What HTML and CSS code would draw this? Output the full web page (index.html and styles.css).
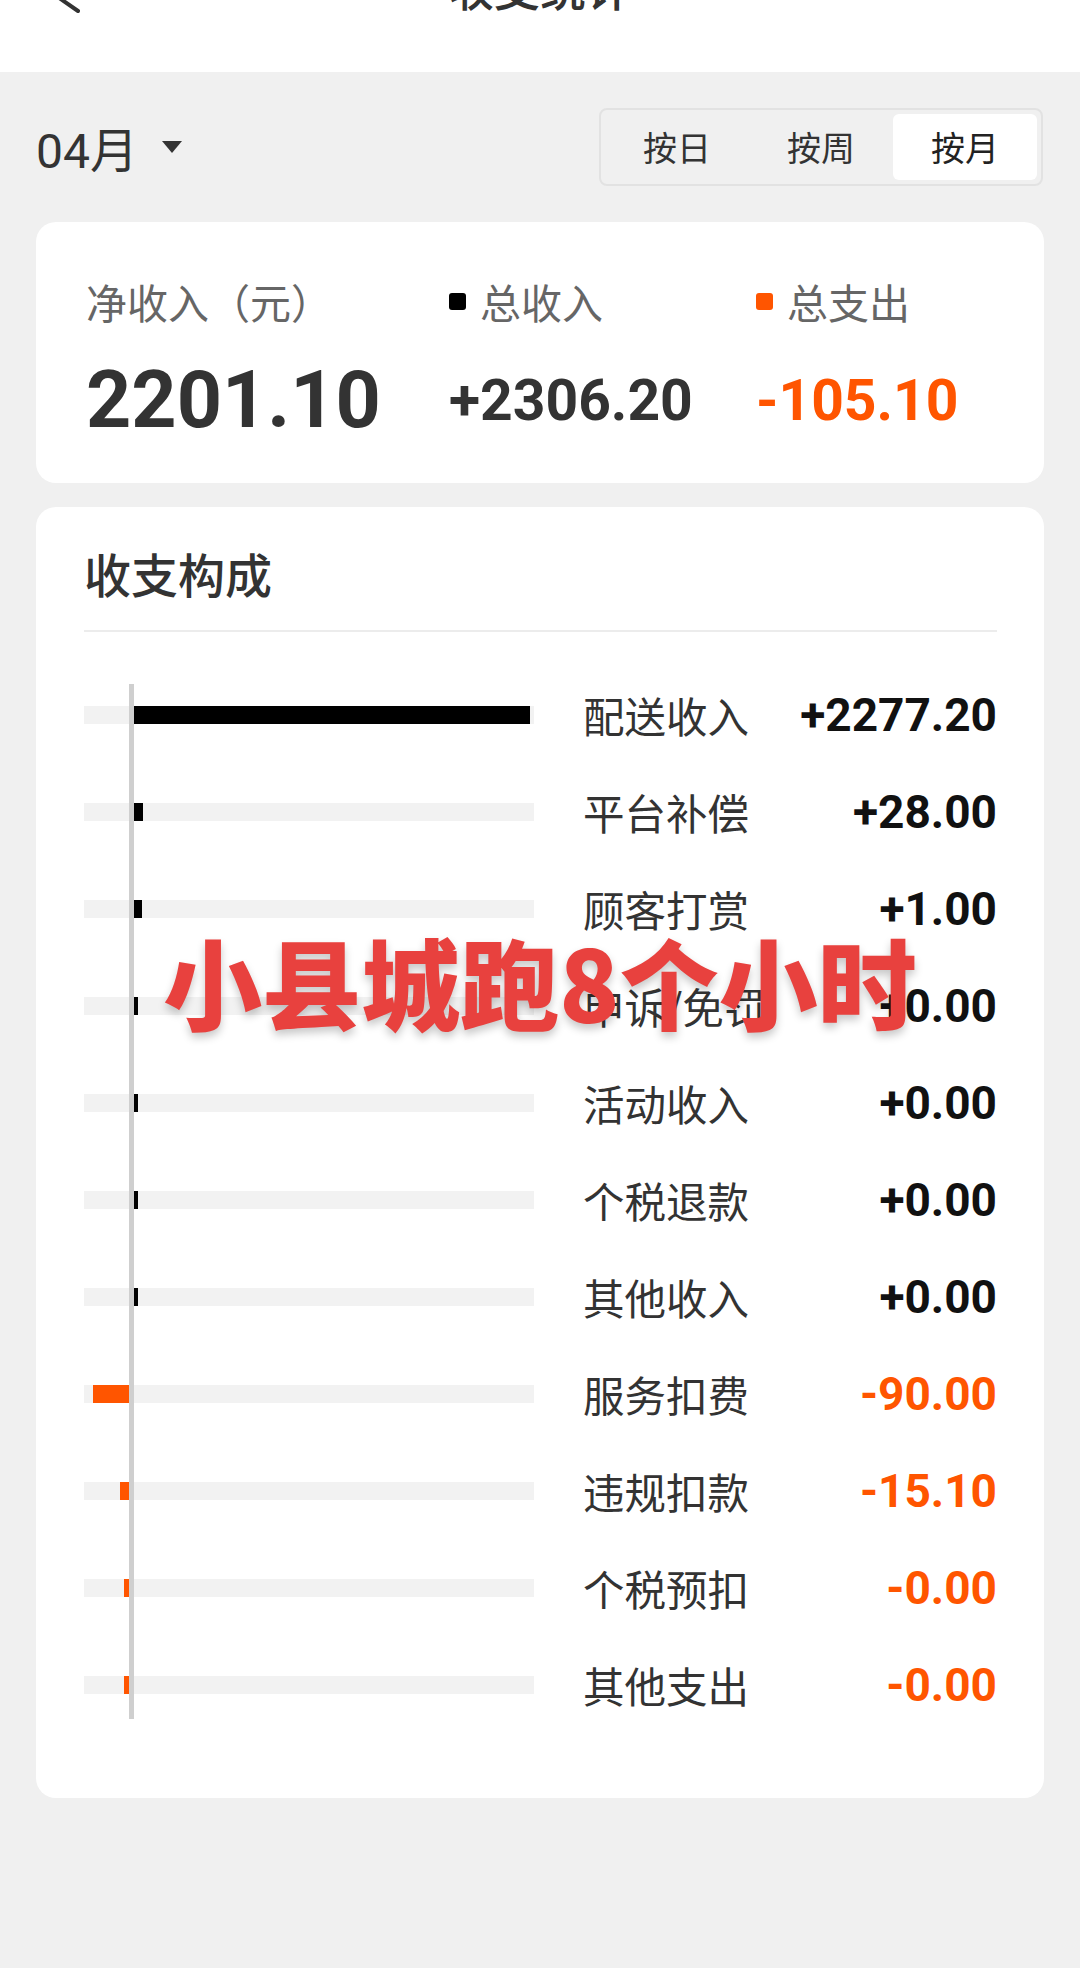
FILE: index.html
```html
<!DOCTYPE html>
<html lang="zh-CN">
<head>
    <meta charset="UTF-8">
    <meta name="viewport" content="width=device-width, initial-scale=1.0">
    <title>收支统计</title>
    <link rel="stylesheet" href="styles.css">
</head>
<body>
    <header class="topbar">
        <div class="nav">
            <svg class="back" viewBox="0 0 40 56" fill="none" stroke="#333" stroke-width="4" stroke-linecap="round" stroke-linejoin="round">
                <polyline points="38,3 2,28 38,53"/>
            </svg>
            <h1>收支统计</h1>
            <span></span>
        </div>
    </header>

    <main class="page">
        <div class="filter">
            <div class="month">04月<span class="caret"></span></div>
            <div class="tabs">
                <span>按日</span>
                <span>按周</span>
                <span class="active">按月</span>
            </div>
        </div>

        <section class="card summary">
            <div class="sum-label">净收入（元）</div>
            <div class="sum-label"><i class="dot"></i>总收入</div>
            <div class="sum-label"><i class="dot orange"></i>总支出</div>
            <div class="net">2201.10</div>
            <div class="amt">+2306.20</div>
            <div class="amt out">-105.10</div>
        </section>

        <section class="card breakdown">
            <h2>收支构成</h2>
            <div class="chart">
                <div class="row">
                    <div class="track"><div class="neg"></div><div class="pos"><div class="bar" style="width:396px"></div></div></div>
                    <span class="label">配送收入</span><span class="value">+2277.20</span>
                </div>
                <div class="row">
                    <div class="track"><div class="neg"></div><div class="pos"><div class="bar" style="width:9px"></div></div></div>
                    <span class="label">平台补偿</span><span class="value">+28.00</span>
                </div>
                <div class="row">
                    <div class="track"><div class="neg"></div><div class="pos"><div class="bar" style="width:8px"></div></div></div>
                    <span class="label">顾客打赏</span><span class="value">+1.00</span>
                </div>
                <div class="row">
                    <div class="track"><div class="neg"></div><div class="pos"><div class="bar" style="width:4px"></div></div></div>
                    <span class="label">申诉/免罚</span><span class="value">+0.00</span>
                </div>
                <div class="row">
                    <div class="track"><div class="neg"></div><div class="pos"><div class="bar" style="width:4px"></div></div></div>
                    <span class="label">活动收入</span><span class="value">+0.00</span>
                </div>
                <div class="row">
                    <div class="track"><div class="neg"></div><div class="pos"><div class="bar" style="width:4px"></div></div></div>
                    <span class="label">个税退款</span><span class="value">+0.00</span>
                </div>
                <div class="row">
                    <div class="track"><div class="neg"></div><div class="pos"><div class="bar" style="width:4px"></div></div></div>
                    <span class="label">其他收入</span><span class="value">+0.00</span>
                </div>
                <div class="row">
                    <div class="track"><div class="neg"><div class="bar" style="width:36px"></div></div><div class="pos"></div></div>
                    <span class="label">服务扣费</span><span class="value out">-90.00</span>
                </div>
                <div class="row">
                    <div class="track"><div class="neg"><div class="bar" style="width:9px"></div></div><div class="pos"></div></div>
                    <span class="label">违规扣款</span><span class="value out">-15.10</span>
                </div>
                <div class="row">
                    <div class="track"><div class="neg"><div class="bar" style="width:5px"></div></div><div class="pos"></div></div>
                    <span class="label">个税预扣</span><span class="value out">-0.00</span>
                </div>
                <div class="row">
                    <div class="track"><div class="neg"><div class="bar" style="width:5px"></div></div><div class="pos"></div></div>
                    <span class="label">其他支出</span><span class="value out">-0.00</span>
                </div>
            </div>
            <div class="stamp">小县城跑8个小时</div>
        </section>
    </main>
</body>
</html>
```

FILE: styles.css
```css
/* General Styling */
body {
    margin: 0;
    padding: 0;
    background: #f0f0f0;
    color: #333333;
    font-family: Roboto, "Noto Sans CJK SC", sans-serif;
}

/* Top bar (scrolled, title partly hidden) */
.topbar {
    height: 72px;
    background: #ffffff;
    overflow: hidden;
}

.nav {
    height: 96px;
    margin-top: -62px;
    display: grid;
    grid-template-columns: 1fr auto 1fr;
    align-items: center;
}

.back {
    width: 40px;
    height: 56px;
    margin-left: 40px;
}

.nav h1 {
    margin: 0;
    font-family: "Noto Sans CJK SC", sans-serif;
    font-size: 46px;
    font-weight: 500;
    line-height: 56px;
    color: #333333;
}

.page {
    padding: 0 36px;
}

/* Month + period switch */
.filter {
    display: flex;
    justify-content: space-between;
    align-items: center;
    height: 77px;
    margin-top: 36px;
}

.month {
    display: flex;
    align-items: center;
    font-size: 48px;
    color: #333333;
}

.caret {
    margin-left: 24px;
    border-left: 10px solid transparent;
    border-right: 10px solid transparent;
    border-top: 12px solid #333333;
}

.tabs {
    display: flex;
    padding: 4px;
    border: 2px solid #e2e2e2;
    border-radius: 8px;
    background: #f0f0f0;
    margin-right: 1px;
}

.tabs span {
    width: 144px;
    height: 66px;
    display: flex;
    align-items: center;
    justify-content: center;
    font-family: "Noto Sans CJK SC", sans-serif;
    font-size: 34px;
    color: #333333;
    border-radius: 6px;
}

.tabs .active {
    background: #ffffff;
    color: #222222;
}

/* Cards */
.card {
    background: #ffffff;
    border-radius: 20px;
}

.summary {
    margin-top: 37px;
    padding: 55px 0 35px 50px;
    display: grid;
    grid-template-columns: 363px 307px 1fr;
    grid-template-rows: 48px 96px;
    row-gap: 27px;
    align-items: center;
}

.sum-label {
    display: flex;
    align-items: center;
    font-family: "Noto Sans CJK SC", sans-serif;
    font-size: 41px;
    line-height: 48px;
    color: #666666;
}

.dot {
    width: 17px;
    height: 17px;
    border-radius: 3px;
    background: #000000;
    margin-right: 14px;
}

.dot.orange {
    background: #ff5500;
}

.net {
    font-size: 79px;
    font-weight: 700;
    line-height: 96px;
    color: #333333;
}

.amt {
    font-size: 57px;
    font-weight: 700;
    color: #333333;
}

.out {
    color: #ff5500 !important;
}

/* Breakdown */
.breakdown {
    position: relative;
    margin-top: 24px;
    padding: 38px 47px 65px 48px;
}

.breakdown h2 {
    margin: 0;
    padding-bottom: 29px;
    border-bottom: 2px solid #ececec;
    font-family: "Noto Sans CJK SC", sans-serif;
    font-size: 47px;
    font-weight: 500;
    line-height: 56px;
    color: #333333;
}

.chart {
    position: relative;
    margin-top: 34px;
}

.chart::before {
    content: "";
    position: absolute;
    left: 45px;
    top: 18px;
    bottom: 14px;
    width: 5px;
    background: #cfcfcf;
}

.row {
    display: flex;
    align-items: center;
    height: 97px;
}

.track {
    width: 450px;
    height: 18px;
    display: flex;
    background: #f2f2f2;
}

.neg {
    width: 45px;
    display: flex;
    justify-content: flex-end;
}

.pos {
    flex: 1;
    margin-left: 5px;
}

.bar {
    height: 18px;
    background: #000000;
}

.neg .bar {
    background: #ff5500;
}

.label {
    flex: 1;
    margin-left: 49px;
    font-family: "Noto Sans CJK SC", sans-serif;
    font-size: 41.5px;
    color: #333333;
}

.value {
    font-size: 46px;
    font-weight: 700;
    color: #111111;
}

/* Red caption laid over the chart */
.stamp {
    position: absolute;
    left: 0;
    right: 0;
    top: 423px;
    text-align: center;
    font-family: "Noto Sans CJK SC", sans-serif;
    font-size: 99px;
    font-weight: 900;
    line-height: 100px;
    color: #e8413e;
    text-shadow: 0 5px 8px rgba(0, 0, 0, 0.22);
    pointer-events: none;
}
```
